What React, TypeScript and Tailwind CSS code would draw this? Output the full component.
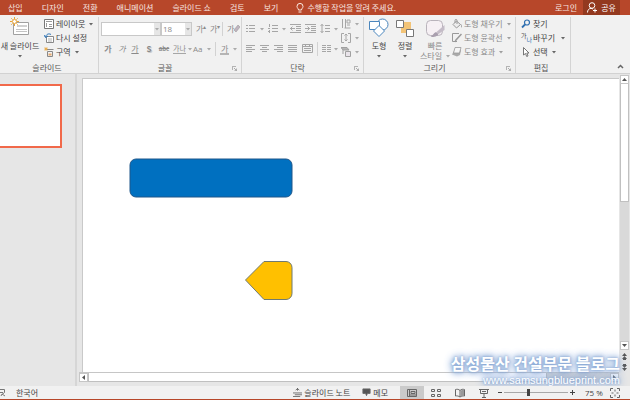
import React, { useState } from "react";

const tabs = ["삽입", "디자인", "전환", "애니메이션", "슬라이드 쇼", "검토", "보기"];

const Caret: React.FC<{ className?: string }> = ({ className = "opacity-80" }) => (
  <svg width="4" height="3" viewBox="0 0 4 3" className={`shrink-0 ${className}`}>
    <path d="M0 0h4L2 2.5z" fill="currentColor" />
  </svg>
);

const Launcher: React.FC = () => (
  <button aria-label="옵션" className="absolute right-1 bottom-0.5">
    <svg width="5" height="5" viewBox="0 0 5 5" fill="none" stroke="#999999" strokeWidth="0.8">
      <path d="M0.4 4V0.4H4M2 2l2.5 2.5M4.6 2.5v2.1H2.5" />
    </svg>
  </button>
);

const Divider: React.FC = () => <span className="h-3.5 w-px shrink-0 bg-[#d2d2d2]" />;

type GroupProps = {
  label: string;
  width: string;
  launcher?: boolean;
  children: React.ReactNode;
};

const Group: React.FC<GroupProps> = ({ label, width, launcher, children }) => (
  <section className={`relative flex h-14 shrink-0 flex-col border-r border-[#d4d4d4] ${width}`}>
    <div className="flex min-h-0 flex-1">{children}</div>
    <div className={`h-2.5 text-center leading-[10px] text-[#555555] ${launcher ? "pr-2.5" : "pr-1"}`}>{label}</div>
    {launcher && <Launcher />}
  </section>
);

type RowProps = { icon: React.ReactNode; text: string; gap?: string; caret?: boolean };

const RowButton: React.FC<RowProps> = ({ icon, text, gap = "gap-1", caret = true }) => (
  <button className="flex h-3.5 items-center whitespace-nowrap">
    <span className="w-3 shrink-0">{icon}</span>
    <span className={`flex items-center ${gap}`}>
      {text}
      {caret && <Caret />}
    </span>
  </button>
);

const Lines: React.FC<{ d: string; width?: number }> = ({ d, width = 10 }) => (
  <svg width={width} height="10" viewBox={`0 0 ${width} 10`} fill="none" stroke="#a6a6a6" strokeWidth="1">
    <path d={d} />
  </svg>
);

const alignments = [
  { name: "왼쪽 맞춤", d: "M0 1.5h9M0 3.5h6M0 5.5h9M0 7.5h6" },
  { name: "가운데 맞춤", d: "M0 1.5h9M2 3.5h5M0 5.5h9M2 7.5h5" },
  { name: "오른쪽 맞춤", d: "M0 1.5h9M3 3.5h6M0 5.5h9M3 7.5h6" },
  { name: "양쪽 맞춤", d: "M0 1.5h9M0 3.5h9M0 5.5h9M0 7.5h9" },
];

const SlidesGroup: React.FC = () => (
  <Group label="슬라이드" width="w-[99px]">
    <button className="flex w-10 shrink-0 flex-col items-center whitespace-nowrap">
      <svg width="20" height="20" viewBox="0 0 20 20" fill="none" className="shrink-0">
        <path d="M3.5 5.5h15v12h-15z" fill="#fff" stroke="#a0a0a0" />
        <path d="M7 8h10v2H7z" fill="#d0d0d0" />
        <path d="M6 12.5h11M6 14.5h11" stroke="#c4c4c4" />
        <circle cx="4.5" cy="4.5" r="2" fill="#fff" stroke="#e8a53a" />
        <path d="M4.5 0v2M4.5 7v2M0 4.5h2M7 4.5h2M1.3 1.3l1.3 1.3M6.4 6.4l1.3 1.3M7.7 1.3L6.4 2.6M2.6 6.4L1.3 7.7" stroke="#e8a53a" />
      </svg>
      <span className="mt-1 leading-[10px]">새 슬라이드</span>
      <Caret className="mt-1 text-[#666666]" />
    </button>
    <div className="ml-1 flex flex-col">
      <RowButton
        text="레이아웃"
        icon={
          <svg width="10" height="10" viewBox="0 0 10 10" fill="none" stroke="#777777">
            <path d="M.5 .5h9v9h-9z" fill="#fff" />
            <path d="M2 2.5h6M2.5 4v4M5 5.5h3M5 7.5h3" stroke="#9a9a9a" />
          </svg>
        }
      />
      <RowButton
        text="다시 설정"
        caret={false}
        icon={
          <svg width="10" height="10" viewBox="0 0 10 10" fill="none">
            <path d="M2.5 3.5h7v6h-7z" fill="#fff" stroke="#888888" />
            <path d="M4 6h4M4 8h4" stroke="#b0b0b0" />
            <path d="M7 1.5C4.500 0 2 1.500 1.500 4M0 2l1.500 2.500L4 3" stroke="#2b74b8" />
          </svg>
        }
      />
      <RowButton
        text="구역"
        icon={
          <svg width="10" height="10" viewBox="0 0 10 10" fill="none">
            <path d="M3 2.500h6.500M3.500 4.500h5v5h-5z" stroke="#888888" />
            <path d="M4.500 6.500h3v2h-3z" fill="#e9a96b" />
            <path d="M2 0v4M0 2h4M.6 .6l2.800 2.800M3.400 .6L.6 3.400" stroke="#e8a53a" strokeWidth="0.7" />
          </svg>
        }
      />
    </div>
  </Group>
);

const FontGroup: React.FC = () => (
  <Group label="글꼴" width="w-[143px]" launcher>
    <div className="flex flex-1 flex-col pl-0.5 text-[#8a8a8a]">
      <div className="flex h-5 items-center pt-1">
        <label className="relative flex">
          <select aria-label="글꼴" className="h-[14px] w-[60px] appearance-none border border-[#c8c8c8] bg-white">
            <option></option>
          </select>
          <span className="pointer-events-none absolute inset-y-px right-px flex w-1.5 items-center bg-[#e6e6e6] pl-px">
            <Caret className="text-[#aaaaaa]" />
          </span>
        </label>
        <label className="relative flex">
          <select aria-label="글꼴 크기" className="h-[14px] w-[31px] appearance-none border border-[#c8c8c8] bg-white pl-px font-['Open_Sans']">
            <option>18</option>
          </select>
          <span className="pointer-events-none absolute inset-y-px right-px flex w-1.5 items-center bg-[#e6e6e6] pl-px">
            <Caret className="text-[#aaaaaa]" />
          </span>
        </label>
        <button className="ml-1 flex w-3.5 items-start">
          가<span className="text-[6px] leading-none">▴</span>
        </button>
        <button className="flex w-3 items-start">
          가<span className="text-[6px] leading-none">▾</span>
        </button>
        <Divider />
        <button className="ml-1 flex" aria-label="서식 지우기">
          가
          <svg width="6" height="9" viewBox="0 0 6 9">
            <path d="M4 1l2 2-4 5-2-2z" fill="#c0b4c0" stroke="#9a9a9a" strokeWidth="0.6" />
          </svg>
        </button>
      </div>
      <div className="flex h-5 items-center pt-1">
        <button className="w-3.5 text-center font-bold">가</button>
        <button className="w-3.5 text-center italic">가</button>
        <button className="w-3 text-center underline">가</button>
        <button className="w-4 text-center font-bold [text-shadow:1px_1px_#cccccc]">S</button>
        <button className="w-3.5 text-[6px] font-bold line-through">abc</button>
        <button className="ml-0.5 flex w-5 items-center gap-0.5 whitespace-nowrap">
          <span className="border-b border-[#a6a6a6] text-[7px] leading-[9px]">가나</span>
          <Caret className="text-[#aaaaaa]" />
        </button>
        <button className="flex w-5 items-center gap-1 font-['Open_Sans']">
          Aa
          <Caret className="text-[#aaaaaa]" />
        </button>
        <span className="ml-0.5 flex">
          <Divider />
        </span>
        <button className="ml-1 flex items-center gap-1">
          <span className="border-b-2 border-[#b5b5b5] px-px leading-[9px]">가</span>
          <Caret className="text-[#aaaaaa]" />
        </button>
      </div>
    </div>
  </Group>
);

const ParagraphGroup: React.FC = () => (
  <Group label="단락" width="w-[122px]" launcher>
    <div className="flex flex-1 flex-col pl-1">
      <div className="flex h-5 items-center gap-1 pt-1">
        <button aria-label="글머리 기호" className="flex items-center gap-1">
          <Lines d="M0 1.500h2M3 1.500h6M0 4.500h2M3 4.500h6M0 7.500h2M3 7.500h6" />
          <Caret className="text-[#aaaaaa]" />
        </button>
        <button aria-label="번호 매기기" className="flex items-center gap-1">
          <Lines d="M1.500 0v3M4 1.500h6M0 4.500h2M4 4.500h6M0 7.500h2M4 7.500h6M1.500 6v3" />
          <Caret className="text-[#aaaaaa]" />
        </button>
        <button aria-label="목록 수준 줄임">
          <Lines width={11} d="M0 .5h11M6 2.500h5M6 4.500h5M6 6.500h5M0 8.500h11M0 4.500h5M2.500 2.500l-2 2 2 2" />
        </button>
        <button aria-label="목록 수준 늘림">
          <Lines width={11} d="M0 .5h11M6 2.500h5M6 4.500h5M6 6.500h5M0 8.500h11M0 4.500h5M2.500 2.500l2 2-2 2" />
        </button>
        <button aria-label="줄 간격" className="flex items-center gap-1">
          <Lines d="M2 0v9M.5 2L2 .5 3.500 2M.5 7L2 8.500 3.500 7M5 1.500h5M5 4.500h5M5 7.500h5" />
          <Caret className="text-[#aaaaaa]" />
        </button>
      </div>
      <div className="flex h-5 items-center gap-1 pt-1">
        {alignments.map((item) => (
          <button key={item.name} aria-label={item.name}>
            <Lines d={item.d} />
          </button>
        ))}
        <button aria-label="균등 분할">
          <Lines width={11} d="M.5 .5h10v8H.5zM0 2.500h11M2 4.500h7M2 6.500h7M3.500 0v3M7.500 0v3" />
        </button>
        <Divider />
        <button aria-label="열" className="flex items-center gap-0.5">
          <Lines d="M0 1.500h4M5 1.500h4M0 3.500h4M5 3.500h4M0 5.500h4M5 5.500h4M0 7.500h4M5 7.500h4" />
          <Caret className="text-[#aaaaaa]" />
        </button>
      </div>
    </div>
    <div className="flex w-[22px] flex-col">
      <button aria-label="텍스트 방향" className="flex h-3.5 items-center gap-1">
        <Lines d="M1.500 0v9M4.500 0v9M3.500 9h6M6 1h3v3H6zM6 6h3" />
        <Caret className="text-[#aaaaaa]" />
      </button>
      <button aria-label="텍스트 맞춤" className="flex h-3.5 items-center gap-1">
        <Lines d="M3 .5H.5v9H3M7 .5h2.500v9H7M5 1v7M3.500 2.500L5 1l1.500 1.500M3.500 6.500L5 8l1.500-1.500" />
        <Caret className="text-[#aaaaaa]" />
      </button>
      <button aria-label="SmartArt로 변환" className="flex h-3.5 items-center gap-1">
        <svg width="10" height="10" viewBox="0 0 10 10" fill="none" stroke="#a0a0a0">
          <path d="M0 .5h6l2 2.500H2z" fill="#b5b5b5" />
          <path d="M4.500 4.500h5v5h-5zM2 3v4" fill="#e9e4ea" />
        </svg>
        <Caret className="text-[#aaaaaa]" />
      </button>
    </div>
  </Group>
);

const DrawingGroup: React.FC = () => (
  <Group label="그리기" width="w-[152px]" launcher>
    <button className="ml-1 flex w-[22px] flex-col items-center leading-[10px]">
      <svg width="20" height="20" viewBox="0 0 20 20" fill="#fff" stroke="#4b86bd" className="shrink-0">
        <circle cx="13.500" cy="7.500" r="5.500" />
        <path d="M.5 4.500h10v8H.5z" />
        <path d="M10 8.500l5.500 5.500-5.500 5.500L4.500 14z" />
      </svg>
      <span className="mt-1">도형</span>
      <Caret className="mt-1 text-[#666666]" />
    </button>
    <button className="ml-1 flex w-[22px] flex-col items-center leading-[10px]">
      <svg width="20" height="20" viewBox="0 0 20 20" fill="#fff" stroke="#777777" className="shrink-0">
        <path d="M6 5h10v11H6z" fill="#f3c477" stroke="none" />
        <path d="M1.500 3.500h7v7h-7zM11.500 12.500h7v7h-7z" />
      </svg>
      <span className="mt-1">정렬</span>
      <Caret className="mt-1 text-[#666666]" />
    </button>
    <button className="mr-0.5 ml-1 flex w-[30px] flex-col items-center whitespace-nowrap leading-[10px] text-[#8a8a8a]">
      <svg width="20" height="20" viewBox="0 0 20 20" fill="none" className="shrink-0">
        <rect x="1.500" y="3.500" width="16" height="15" rx="4" fill="#f6f0f4" stroke="#b9b3bb" />
        <path d="M19.500 8v5l-6 4-2-2z" fill="#c4bcc7" />
        <path d="M11 15l2.500 2c-1 2.500-4 3-8 3 2-1 3-4 5.500-5z" fill="#a99fae" />
      </svg>
      <span className="mt-1">빠른</span>
      <span className="flex items-center gap-1">
        스타일
        <Caret className="text-[#aaaaaa]" />
      </span>
    </button>
    <div className="flex flex-col text-[#8a8a8a]">
      <RowButton
        text="도형 채우기"
        icon={
          <svg width="10" height="10" viewBox="0 0 10 10" fill="none" stroke="#999999">
            <path d="M4.500 2l4 3.500-4 3.500L1 5.500zM3 4V1.500C3 0 5 0 5 1.500V5" fill="#eeeeee" />
            <path d="M9 5.500c1 1 1 2.500 0 3" />
          </svg>
        }
      />
      <RowButton
        text="도형 윤곽선"
        icon={
          <svg width="10" height="10" viewBox="0 0 10 10" fill="none" stroke="#999999">
            <path d="M7 .5H.5v8H5" />
            <path d="M9.500 1L4 7l-1 2" strokeWidth="1.500" />
          </svg>
        }
      />
      <RowButton
        text="도형 효과"
        icon={
          <svg width="10" height="10" viewBox="0 0 10 10">
            <path d="M3 2l6 1-1 5-3 1.500-5-2z" fill="#aaaaaa" />
            <path d="M3 .5h6L7.500 6h-6z" fill="#f5f5f5" stroke="#999999" strokeWidth="0.800" />
          </svg>
        }
      />
    </div>
  </Group>
);

const EditGroup: React.FC = () => (
  <Group label="편집" width="w-[55px]">
    <div className="ml-[5px] flex flex-col">
      <RowButton
        text="찾기"
        caret={false}
        icon={
          <svg width="10" height="10" viewBox="0 0 10 10" fill="none" stroke="#2f6fb0">
            <circle cx="6" cy="3.500" r="2.500" strokeWidth="1.200" />
            <path d="M4 5.500L1 8.500" strokeWidth="1.800" />
          </svg>
        }
      />
      <RowButton
        text="바꾸기"
        gap="gap-1.5"
        icon={
          <span className="flex text-[6px] leading-[6px]">
            가<span className="pt-1 text-[#2f6fb0]">나</span>
          </span>
        }
      />
      <RowButton
        text="선택"
        icon={
          <svg width="10" height="10" viewBox="0 0 10 10" fill="#fff" stroke="#666666" strokeWidth="0.900">
            <path d="M2.500 .5v7.500l2-1.500 1.200 3 1.300-.6L5.800 6H8z" />
          </svg>
        }
      />
    </div>
  </Group>
);

const Arrow: React.FC<{ d: string }> = ({ d }) => (
  <svg width="7" height="7" viewBox="0 0 7 7" fill="#555555">
    <path d={d} />
  </svg>
);

const scrollButton = "flex size-[9px] shrink-0 items-center justify-center border border-[#c6c6c6] bg-white";

const StatusIcon: React.FC<{ children: React.ReactNode; size?: number }> = ({ children, size = 10 }) => (
  <svg width={size} height={size} viewBox="0 0 10 10" fill="none" stroke="#666666" className="shrink-0">
    {children}
  </svg>
);

const App: React.FC = () => {
  const [zoom, setZoom] = useState<number>(75);

  return (
    <div className="flex h-screen flex-col overflow-hidden border-b border-[#b7472a] bg-[#e6e6e6] font-['Noto_Sans_CJK_KR',sans-serif] text-[8px] leading-[10px] text-[#444444]">
      {/* Ribbon tabs */}
      <nav className="flex h-[15px] shrink-0 items-center bg-[#b7472a] text-[#f8e6e0]">
        <div className="flex gap-[19px] pl-2">
          {tabs.map((tab) => (
            <button key={tab} className="whitespace-nowrap">
              {tab}
            </button>
          ))}
        </div>
        <button className="ml-[18px] flex items-center gap-[3px] whitespace-nowrap">
          <svg width="8" height="10" viewBox="0 0 8 10" fill="none" stroke="#fbe9e2">
            <path d="M2.500 7C2.500 5.500 1 5 1 3.400a3 3 0 0 1 6 0C7 5 5.500 5.500 5.500 7zM2.500 9h3" />
          </svg>
          수행할 작업을 알려 주세요.
        </button>
        <button className="mr-1.5 ml-auto">로그인</button>
        <button className="mr-2.5 flex h-full w-[37px] items-center justify-center gap-1 bg-[#93391f] text-white">
          <svg width="10" height="11" viewBox="0 0 10 11" fill="none" stroke="currentColor">
            <circle cx="5" cy="3.500" r="2.800" />
            <path d="M.5 10.500C.5 8 2 6.500 4 6.300L6 7M8 6.500v4M6 8.500h4" />
          </svg>
          공유
        </button>
      </nav>

      {/* Ribbon */}
      <div className="flex h-[59px] shrink-0 border-b border-[#d2d2d2] bg-[#f1f1f1] pt-0.5">
        <SlidesGroup />
        <FontGroup />
        <ParagraphGroup />
        <DrawingGroup />
        <EditGroup />
        <button aria-label="리본 메뉴 축소" className="mr-1.5 mb-1 ml-auto self-end">
          <svg width="7" height="5" viewBox="0 0 7 5" fill="none" stroke="#666666" strokeWidth="1.500">
            <path d="M1 4l2.500-2.500L6 4" />
          </svg>
        </button>
      </div>

      {/* Workspace */}
      <main className="relative flex min-h-0 flex-1 overflow-hidden">
        <aside className="w-[77px] shrink-0 border-r-2 border-[#d6d6d6] pt-2.5">
          <div className="h-16 w-[62px] border-2 border-l-0 border-[#f1694a] bg-white" />
        </aside>

        <div className="flex min-w-0 flex-1 flex-col pt-1 pl-0.5">
          <div className="relative ml-[3px] flex-1 border-t border-l border-[#c9c9c9] bg-white">
            <svg width="164" height="40" viewBox="0 0 164 40" className="absolute top-[79px] left-[46px]">
              <rect x="1" y="1" width="162" height="38" rx="6" fill="#0070c0" stroke="#1f568a" />
            </svg>
            <svg width="50" height="40" viewBox="0 0 50 40" className="absolute top-[181px] left-[161px]">
              <path d="M1.500 20L20 1.500h22a6 6 0 0 1 6 6v26a6 6 0 0 1-6 6H20z" fill="#ffc000" stroke="#6f7a72" />
            </svg>
          </div>
          <div className="mb-1 flex h-2.5 shrink-0 border-t border-[#c6c6c6] bg-[#d6d6d6]">
            <button aria-label="왼쪽으로" className={scrollButton}>
              <Arrow d="M5 1v5L2 3.500z" />
            </button>
            <div className="w-[85%] border border-t-0 border-[#c0c0c0] bg-white" />
            <button aria-label="오른쪽으로" className={`ml-auto ${scrollButton}`}>
              <Arrow d="M2 1v5l3-2.500z" />
            </button>
          </div>
        </div>

        <div className="mb-3.5 flex w-[11px] shrink-0 flex-col items-center pt-px">
          <button aria-label="위로" className={scrollButton}>
            <Arrow d="M1 5h5L3.500 2z" />
          </button>
          <div className="w-[9px] flex-1 bg-[#d9d9d9]">
            <div className="h-[46%] border border-t-0 border-[#c0c0c0] bg-white" />
          </div>
          <button aria-label="아래로" className={scrollButton}>
            <Arrow d="M1 2h5L3.500 5z" />
          </button>
          <button aria-label="이전 슬라이드" className="mt-0.5 p-px">
            <Arrow d="M1 3h5L3.500 0zM1 6h5L3.500 3zM2 6h3v1H2z" />
          </button>
          <button aria-label="다음 슬라이드" className="mt-0.5 p-px">
            <Arrow d="M1 1h5L3.500 4zM1 4h5L3.500 7zM2 0h3v1H2z" />
          </button>
        </div>

        {/* Watermark */}
        <div className="pointer-events-none absolute right-2.5 bottom-0 flex flex-col items-end gap-px whitespace-nowrap text-white [text-shadow:0_0_2px_#86a6d4,0_0_4px_#86a6d4,0_0_8px_#86a6d4,0_0_10px_#9db8e0]">
          <span className="text-base leading-5 font-bold">삼성물산 건설부문 블로그</span>
          <span className="font-['Liberation_Sans'] text-[11px] leading-3">www.samsungblueprint.com</span>
        </div>
      </main>

      {/* Status bar */}
      <footer className="flex h-[13px] shrink-0 items-center bg-[#f1f1f1] pr-2.5">
        <svg width="6" height="9" viewBox="0 0 6 9" fill="none" stroke="#777777">
          <path d="M0 1.500h4.500v3L2 6.500M0 4.500h3M1 8l1-2 3 2" />
        </svg>
        <button className="ml-2.5">한국어</button>
        <button className="ml-auto flex items-center gap-0.5 whitespace-nowrap">
          <StatusIcon size={9}>
            <path d="M5 0v3M3 2.500L5 .5l2 2M0 5.500h10M2 7.500h8M0 9.500h8" />
          </StatusIcon>
          슬라이드 노트
        </button>
        <button className="ml-3 flex items-center gap-0.5 whitespace-nowrap">
          <StatusIcon size={9}>
            <path d="M1 1h8v5H6L5 8.500 4 6H1z" fill="#555555" />
          </StatusIcon>
          메모
        </button>
        <button aria-label="기본" className="ml-3 flex h-full w-6 items-center justify-center bg-[#cacaca]">
          <StatusIcon>
            <path d="M.5 1.500h9v7h-9zM2.500 1.500v7M4 3.500h4v2H4zM3 7h6" />
          </StatusIcon>
        </button>
        <button aria-label="여러 슬라이드" className="flex w-6 justify-center">
          <StatusIcon>
            <path d="M.5 1.500h3v2h-3zM6.500 1.500h3v2h-3zM.5 6.500h3v2h-3zM6.500 6.500h3v2h-3z" />
          </StatusIcon>
        </button>
        <button aria-label="읽기용 보기" className="flex w-6 justify-center">
          <StatusIcon>
            <path d="M5 2.500v6.500M5 2.500C3.500 1 2 1.200.5 1.500v6.500c1.500-.3 3 0 4.500 1 1.500-1 3-1.300 4.500-1V1.500C8 1.200 6.500 1 5 2.500z" />
            <path d="M5.500 2.500L9 1.500V8l-3.500.5z" fill="#999999" stroke="none" />
          </StatusIcon>
        </button>
        <button aria-label="슬라이드 쇼 보기" className="flex w-6 justify-center">
          <StatusIcon>
            <path d="M0 1.500h10M1.500 1.500v4h7v-4M5 5.500v3.500M3 9.500h4M3 3.500h4" />
          </StatusIcon>
        </button>
        <button aria-label="축소" className="ml-0.5 flex h-2.5 w-1.5 items-center">
          <span className="h-px w-1 bg-[#444444]" />
        </button>
        <input
          type="range"
          aria-label="확대/축소"
          min={10}
          max={185}
          value={zoom}
          onChange={(e) => setZoom(Number(e.target.value))}
          className="h-2 w-16 appearance-none bg-[linear-gradient(#a8a8a8,#a8a8a8)] bg-[length:100%_1px] bg-center bg-no-repeat [&::-webkit-slider-thumb]:h-[7px] [&::-webkit-slider-thumb]:w-[3px] [&::-webkit-slider-thumb]:appearance-none [&::-webkit-slider-thumb]:bg-[#444444]"
        />
        <button aria-label="확대" className="ml-0.5 flex">
          <svg width="5" height="5" viewBox="0 0 5 5" stroke="#444444">
            <path d="M0 2.500h5M2.500 0v5" />
          </svg>
        </button>
        <output className="ml-2.5 w-[25px] whitespace-nowrap font-['Open_Sans']">{zoom} %</output>
        <button aria-label="창에 맞춤">
          <StatusIcon>
            <path d="M.5 3V.5H3M7 .5h2.500V3M9.500 7v2.500H7M3 9.500H.5V7M5 1.500v2M5 6.500v2M1.500 5h2M6.500 5h2" />
          </StatusIcon>
        </button>
      </footer>
    </div>
  );
};

export default App;
